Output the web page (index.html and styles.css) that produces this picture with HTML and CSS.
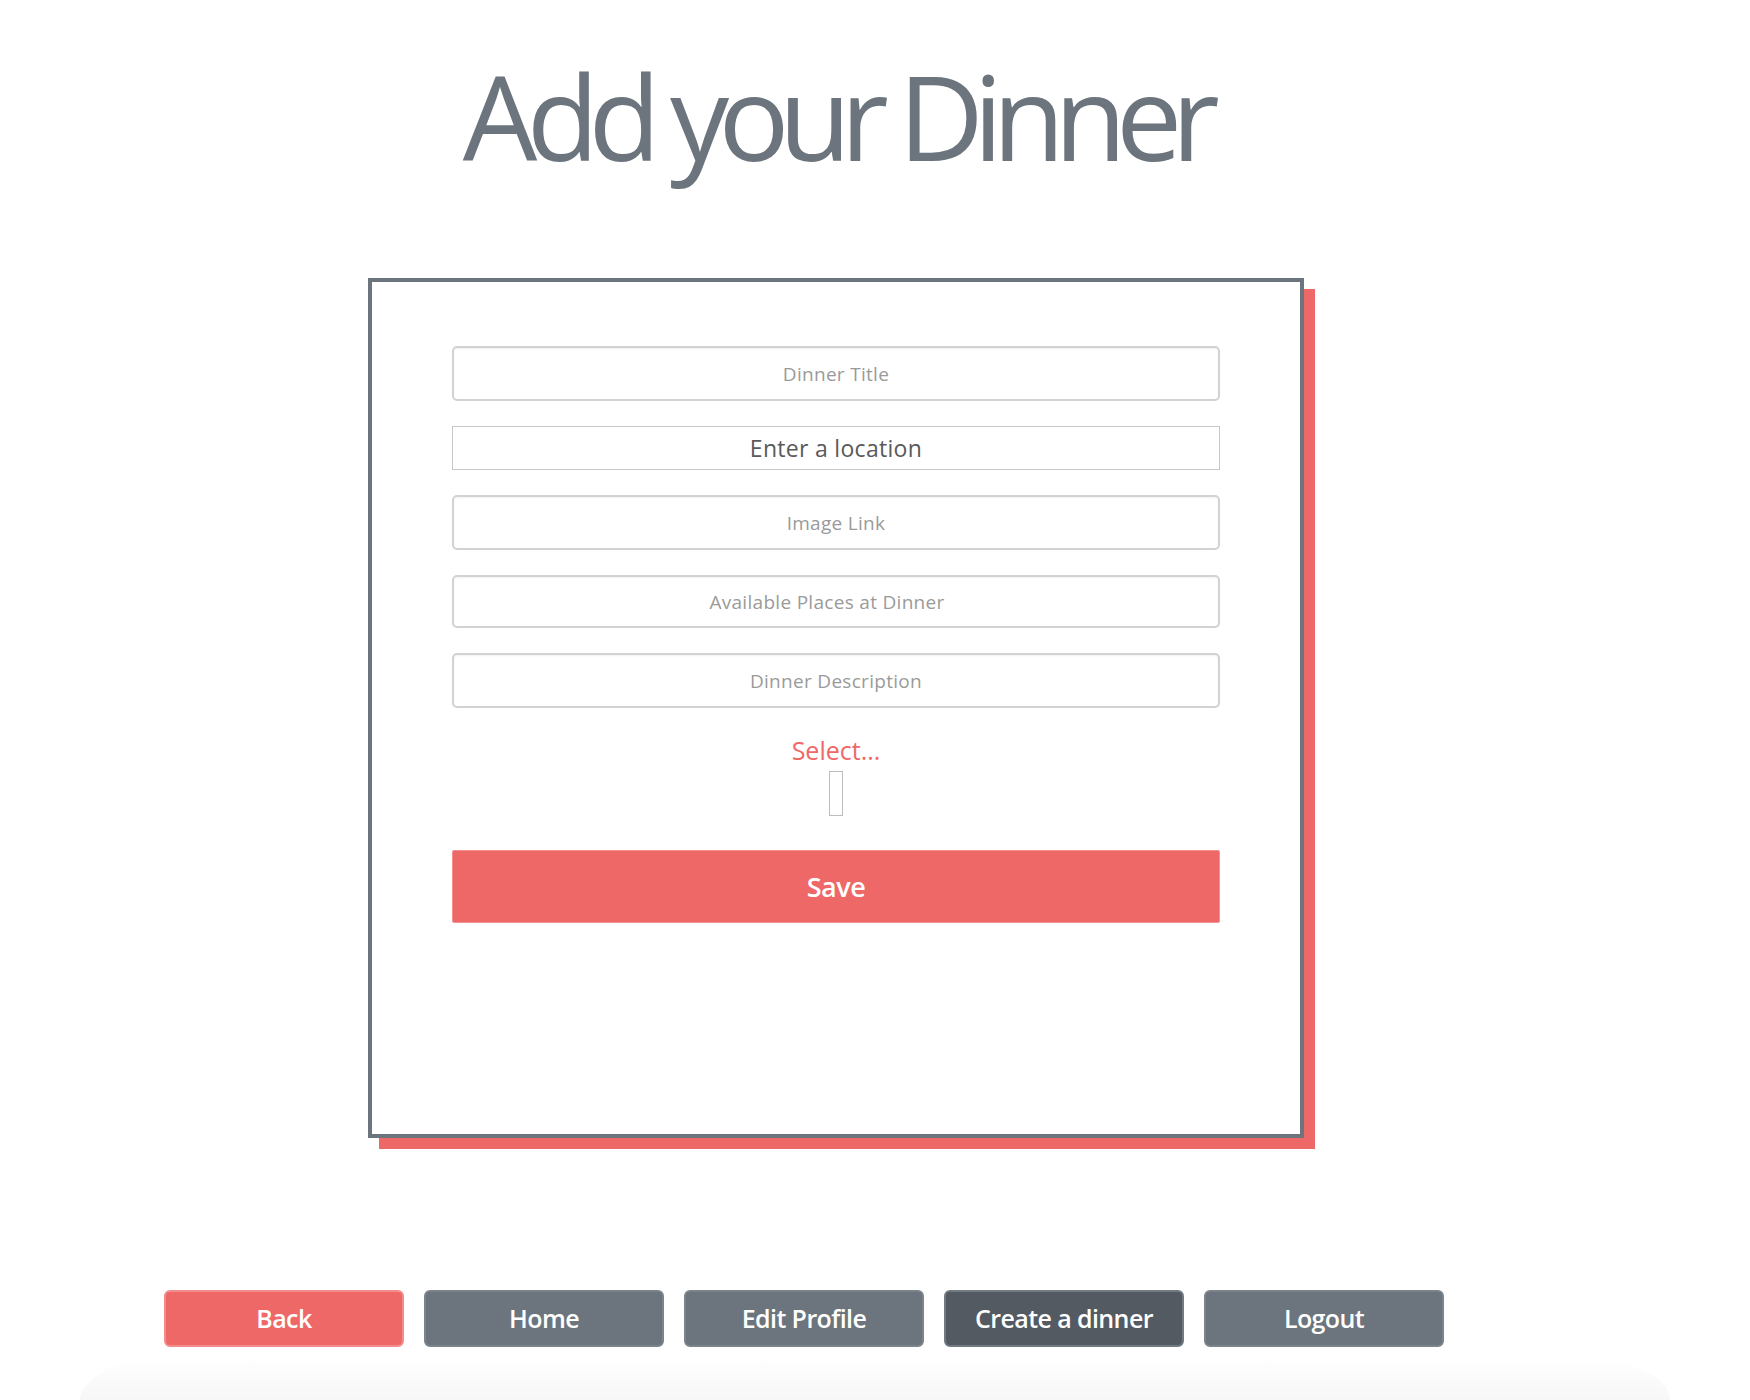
FILE: index.html
```html
<!DOCTYPE html>
<html lang="en">
<head>
    <meta charset="UTF-8">
    <meta name="viewport" content="width=device-width, initial-scale=1.0">
    <title>Add your Dinner</title>
    <link rel="stylesheet" href="styles.css">
</head>
<body>
    <div class="page">
        <h1 class="title">Add your Dinner</h1>

        <!-- Dinner form card -->
        <div class="card">
            <form class="dinner-form">
                <input class="field" type="text" placeholder="Dinner Title">
                <input class="field location" type="text" placeholder="Enter a location">
                <input class="field" type="text" placeholder="Image Link">
                <input class="field places" type="number" placeholder="Available Places at Dinner">
                <input class="field" type="text" placeholder="Dinner Description">
                <div class="select-label">Select...</div>
                <input class="tiny-input" type="text">
                <button class="save-btn" type="button">Save</button>
            </form>
        </div>

        <!-- Bottom navigation -->
        <nav class="nav">
            <button class="nav-btn back">Back</button>
            <button class="nav-btn">Home</button>
            <button class="nav-btn">Edit Profile</button>
            <button class="nav-btn active">Create a dinner</button>
            <button class="nav-btn">Logout</button>
        </nav>

        <div class="footer-shade"></div>
    </div>
</body>
</html>
```

FILE: styles.css
```css
body {
    margin: 0;
    font-family: 'Open Sans', 'Noto Sans', sans-serif;
    background-color: #fff;
    color: #6c757d;
}

.page {
    width: 1672px;
}

.title {
    margin: 57px 0 0;
    font-size: 118px;
    line-height: 118px;
    font-weight: 400;
    letter-spacing: -0.09em;
    text-align: center;
    color: #6c757d;
}

/* Form card with red offset shadow */
.card {
    box-sizing: border-box;
    width: 936px;
    height: 860px;
    margin: 103px auto 0;
    border: 4px solid #6c757d;
    background: #fff;
    box-shadow: 11px 11px 0 #ef6868;
    padding: 64px 80px 0;
}

.dinner-form {
    display: flex;
    flex-direction: column;
    align-items: center;
}

.field {
    box-sizing: border-box;
    display: block;
    width: 100%;
    height: 55px;
    margin: 0 0 25px;
    border: 2px solid #d2d2d2;
    border-radius: 5px;
    box-shadow: inset 0 1px 2px rgba(0, 0, 0, 0.06);
    background: #fff;
    font-family: inherit;
    font-size: 19px;
    letter-spacing: 0.3px;
    text-align: center;
    color: #555;
    outline: none;
}

.field::placeholder {
    color: #9a9a9a;
}

.field.location {
    height: 44px;
    border: 1px solid #c8c8c8;
    border-radius: 0;
    box-shadow: none;
    font-size: 23px;
}

.field.location::placeholder {
    color: #5a5a5a;
}

.field.places {
    height: 53px;
    padding-right: 20px;
    -moz-appearance: textfield;
}

.field.places::-webkit-inner-spin-button,
.field.places::-webkit-outer-spin-button {
    -webkit-appearance: none;
    margin: 0;
}

.field:last-of-type {
    margin-bottom: 0;
}

.select-label {
    margin-top: 2px;
    font-size: 25px;
    line-height: 30px;
    color: #ef6868;
}

.tiny-input {
    box-sizing: border-box;
    width: 14px;
    height: 45px;
    margin: 6px 0 0;
    padding: 0;
    border: 1px solid #bdbdbd;
    background: #fff;
}

.save-btn {
    box-sizing: border-box;
    width: 100%;
    height: 73px;
    margin-top: 34px;
    border: 1px solid #f39090;
    border-radius: 2px;
    background-color: #ef6868;
    color: #fff;
    font-family: inherit;
    font-size: 27px;
    font-weight: 600;
    letter-spacing: -0.5px;
    cursor: pointer;
}

/* Navigation buttons */
.nav {
    display: flex;
    gap: 20px;
    margin-top: 152px;
    padding-left: 164px;
}

.nav-btn {
    box-sizing: border-box;
    width: 240px;
    height: 57px;
    border: 2px solid #7c848b;
    border-radius: 6px;
    background-color: #6c757d;
    color: #fff;
    font-family: inherit;
    font-size: 25px;
    font-weight: 600;
    letter-spacing: -0.6px;
    line-height: 50px;
    padding: 0 0 2px;
    cursor: pointer;
}

.nav-btn.back {
    background-color: #ef6868;
    border-color: #f38d8d;
}

.nav-btn.active {
    background-color: #535a61;
    border-color: #737b82;
}

/* Faint shading at the bottom of the page */
.footer-shade {
    height: 44px;
    margin: 9px 0 0 80px;
    width: 1590px;
    background: linear-gradient(to bottom, rgba(246, 246, 246, 0), #f7f7f7);
    border-radius: 100px 100px 0 0 / 44px 44px 0 0;
}
```
